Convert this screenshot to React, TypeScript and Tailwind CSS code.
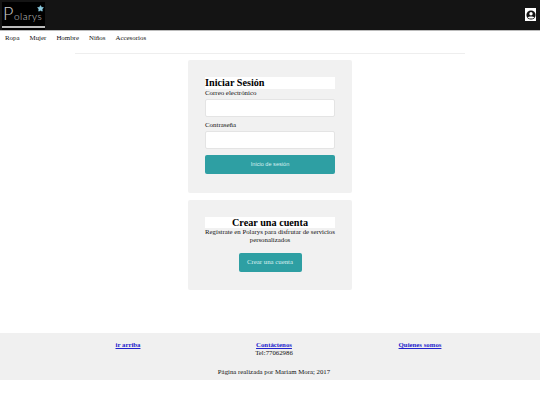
import { Star } from "lucide-react";

function Logo() {
  return (
    <div className="relative w-[43px] h-[28px] bg-black mt-[2px] ml-[2px] font-['Lato',sans-serif] font-light text-[#ccc]">
      <div className="absolute left-[1px] top-[2px] flex items-baseline tracking-[0.5px]">
        <span className="text-[18px] leading-[18px]">P</span>
        <span className="text-[10px] leading-[14px]">olarys</span>
      </div>
      <div className="absolute left-0 right-0 top-[24px] h-[1.5px] bg-[#bbb]" />
      <Star size={7} className="absolute right-[1px] top-[3px] text-[#8ccbe0] fill-[#8ccbe0]" />
    </div>
  );
}

function Field({ label }: { label: string }) {
  return (
    <div>
      <div className="text-[6.9px] leading-[8px] text-[#111]">{label}</div>
      <div className="mt-[2px] h-[18px] bg-white border border-[#e4e4e4] rounded-[2px]" />
    </div>
  );
}

export default function App() {
  return (
    <div className="w-[540px] h-[405px] bg-white overflow-hidden font-['Liberation_Serif',serif]">
      {/* Header */}
      <div className="h-[31px] bg-[#141414] border-b border-[#bbb] flex justify-between items-start">
        <Logo />
        <div className="mt-[8px] mr-[4px] w-[11px] h-[13px] bg-white flex items-center justify-center">
          <svg width="10" height="10" viewBox="0 0 10 10">
            <circle cx="5" cy="5" r="4.6" fill="#111" />
            <circle cx="5" cy="3.8" r="1.7" fill="#fff" />
            <path d="M1.8 7.6C2.6 6.2 7.4 6.2 8.2 7.6L7 8.5H3Z" fill="#fff" />
          </svg>
        </div>
      </div>

      {/* Nav */}
      <div className="h-[22px] pt-[3px] ml-[5px] flex items-start gap-[10px] text-[6.9px] leading-[8px] text-[#111] w-max">
        <span>Ropa</span>
        <span>Mujer</span>
        <span>Hombre</span>
        <span>Niños</span>
        <span>Accesorios</span>
      </div>
      <div className="h-px bg-[#eee] ml-[75px] w-[390px]" />

      <div className="flex flex-col items-center mt-[6px] gap-[7px]">
        {/* Login */}
        <div className="w-[164px] h-[133px] bg-[#f1f1f1] rounded-[2px] px-[17px] pt-[17px]">
          <div className="h-[12px] bg-white text-[10.2px] leading-[12px] font-bold text-black">Iniciar Sesión</div>
          <div className="flex flex-col gap-[4px]">
            <Field label="Correo electrónico" />
            <Field label="Contraseña" />
          </div>
          <div className="mt-[6px] h-[19px] bg-[#2e9fa3] rounded-[2px] flex items-center justify-center text-[5.6px] text-[#d8f0f0] font-['Liberation_Sans',sans-serif]">
            Inicio de sesión
          </div>
        </div>

        {/* Register */}
        <div className="w-[164px] h-[90px] bg-[#f1f1f1] rounded-[2px] px-[17px] pt-[17px] text-center">
          <div className="h-[11px] bg-white text-[10.2px] leading-[11px] font-bold text-black">Crear una cuenta</div>
          <div className="text-[6.8px] leading-[8px] text-[#111]">
            Regístrate en Polarys para disfrutar de servicios personalizados
          </div>
          <div className="mt-[9px] mx-auto w-[63px] h-[19px] bg-[#2e9fa3] rounded-[2px] flex items-center justify-center text-[6.8px] text-[#d8f0f0]">
            Crear una cuenta
          </div>
        </div>
      </div>

      {/* Footer */}
      <div className="mt-[43px] h-[47px] bg-[#f0f0f0] text-[6.8px] leading-[8px] text-[#111]">
        <div className="grid grid-cols-3 w-[438px] ml-[55px] pt-[8px] text-center">
          <div>
            <a href="#" className="font-bold text-[#2222cc] underline">ir arriba</a>
          </div>
          <div>
            <a href="#" className="font-bold text-[#2222cc] underline">Contáctenos</a>
            <div>Tel:77062986</div>
          </div>
          <div>
            <a href="#" className="font-bold text-[#2222cc] underline">Quienes somos</a>
          </div>
        </div>
        <div className="text-center mt-[11px] ml-[8px]">Página realizada por Mariam Mora; 2017</div>
      </div>
    </div>
  );
}
